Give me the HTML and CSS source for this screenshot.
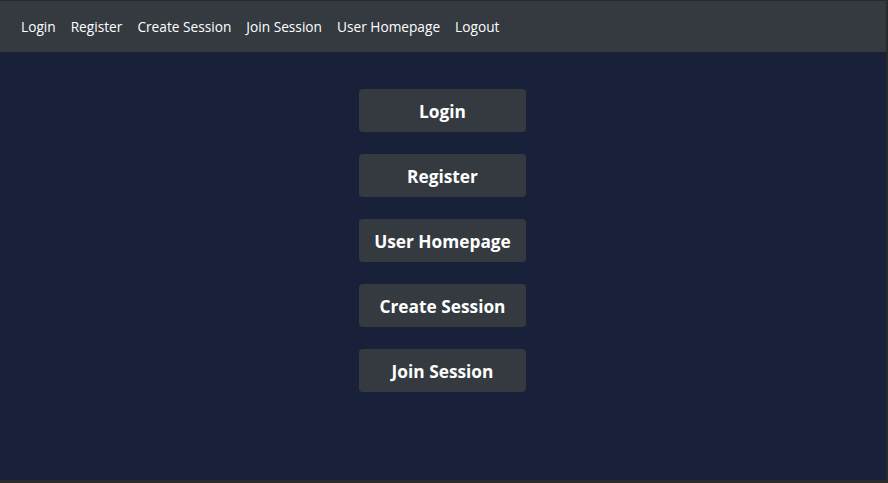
FILE: index.html
```html
<!DOCTYPE html>
<html>
<head>
<meta charset="utf-8">
<link rel="stylesheet" href="styles.css">
</head>
<body>
<div class="window">
  <nav class="navbar">
    <a class="nav-link" href="#">Login</a>
    <a class="nav-link" href="#">Register</a>
    <a class="nav-link" href="#">Create Session</a>
    <a class="nav-link" href="#">Join Session</a>
    <a class="nav-link" href="#">User Homepage</a>
    <a class="nav-link" href="#">Logout</a>
  </nav>
  <main class="menu">
    <button class="menu-btn">Login</button>
    <button class="menu-btn">Register</button>
    <button class="menu-btn">User Homepage</button>
    <button class="menu-btn">Create Session</button>
    <button class="menu-btn">Join Session</button>
  </main>
</div>
</body>
</html>
```
FILE: styles.css
```css
html, body {
  margin: 0;
  padding: 0;
  background: #282828;
}
.window {
  box-sizing: border-box;
  width: 888px;
  height: 483px;
  border-top: 1px solid #2a2a2a;
  border-right: 2px solid #2a2a2a;
  border-bottom: 3px solid #2a2a2a;
  background: #19203a;
  display: flex;
  flex-direction: column;
  font-family: "Open Sans", "Noto Sans", sans-serif;
}
.navbar {
  height: 51px;
  background: #343a40;
  display: flex;
  align-items: center;
  padding-left: 21px;
  box-sizing: border-box;
  gap: 15px;
  flex-shrink: 0;
}
.nav-link {
  color: #ffffff;
  text-decoration: none;
  font-size: 13.7px;
}
.menu {
  display: flex;
  flex-direction: column;
  align-items: center;
  gap: 22px;
  padding-top: 37px;
  padding-right: 1px;
}
.menu-btn {
  width: 167px;
  height: 43px;
  background: #343a40;
  color: #ffffff;
  border: none;
  border-radius: 4px;
  font-family: "Open Sans", "Noto Sans", sans-serif;
  font-weight: 700;
  font-size: 17.3px;
  padding: 2px 0 0 0;
}
```
